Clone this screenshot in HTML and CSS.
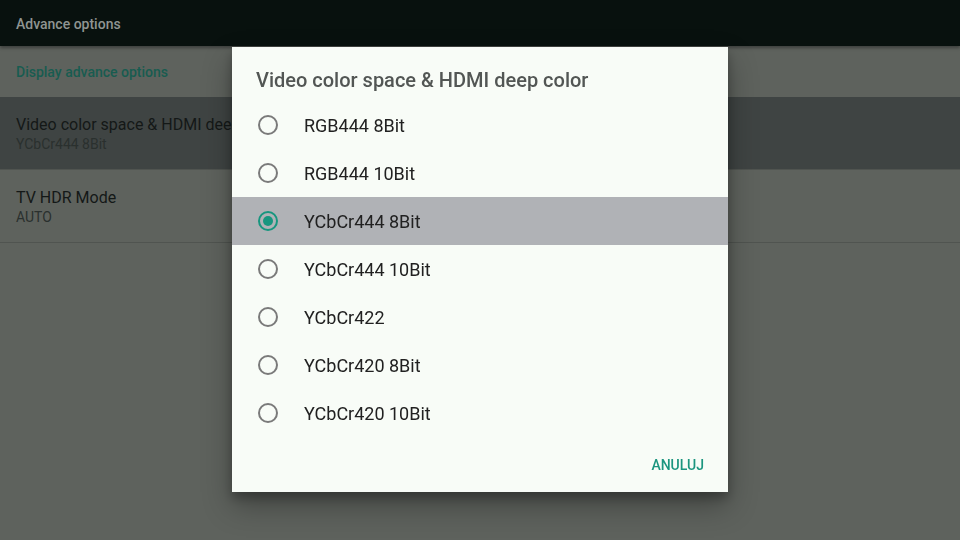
FILE: index.html
```html
<html>
  <head>
    <link rel="stylesheet" href="styles.css">
  </head>

  <body>
    <div class="screen">
      <div class="appbar">Advance options</div>
      <div class="settings">
        <div class="settings-header">Display advance options</div>
        <div class="settings-row selected">
          <div class="row-title">Video color space &amp; HDMI deep color</div>
          <div class="row-sub">YCbCr444 8Bit</div>
        </div>
        <div class="settings-row">
          <div class="row-title">TV HDR Mode</div>
          <div class="row-sub">AUTO</div>
        </div>
      </div>
    </div>

    <div class="scrim">
      <div class="dialog">
        <div class="dialog-title">Video color space &amp; HDMI deep color</div>
        <div class="choices">
          <div class="choice"><span class="radio"></span>RGB444 8Bit</div>
          <div class="choice"><span class="radio"></span>RGB444 10Bit</div>
          <div class="choice checked"><span class="radio"></span>YCbCr444 8Bit</div>
          <div class="choice"><span class="radio"></span>YCbCr444 10Bit</div>
          <div class="choice"><span class="radio"></span>YCbCr422</div>
          <div class="choice"><span class="radio"></span>YCbCr420 8Bit</div>
          <div class="choice"><span class="radio"></span>YCbCr420 10Bit</div>
        </div>
        <div class="dialog-actions">
          <div class="btn-text">ANULUJ</div>
        </div>
      </div>
    </div>
  </body>
</html>
```

FILE: styles.css
```css
body {
  margin: 0;
  width: 960px;
  height: 540px;
  overflow: hidden;
  font-family: Roboto, "Liberation Sans", sans-serif;
  background-color: rgb(94, 98, 93);
}
.screen {
  height: 540px;
  display: flex;
  flex-direction: column;
}
.appbar {
  height: 46px;
  flex: none;
  display: flex;
  align-items: center;
  padding-left: 16px;
  padding-top: 1px;
  box-sizing: border-box;
  font-size: 14px; font-weight: 500;
  color: rgb(143, 149, 146);
  background-color: rgb(8, 17, 14);
  box-shadow: 0 2px 3px rgba(0, 0, 0, 0.35);
}
.settings {
  display: flex;
  flex-direction: column;
}
.settings-header {
  height: 51px;
  display: flex;
  align-items: center;
  padding-left: 16px;
  font-size: 14px; font-weight: 500;
  color: rgb(24, 92, 80);
}
.settings-row {
  height: 72px;
  display: flex;
  flex-direction: column;
  justify-content: center;
  padding-left: 16px;
  border-bottom: 1px solid rgb(80, 84, 80);
}
.settings-row.selected {
  background-color: rgb(63, 68, 67);
}
.row-title {
  font-size: 16px;
  color: rgb(20, 24, 23);
  white-space: nowrap;
}
.row-sub {
  font-size: 14px;
  margin-top: 2px;
  color: rgb(42, 48, 46);
}
.scrim {
  position: fixed;
  top: 0; left: 0; right: 0; bottom: 0;
  display: flex;
  align-items: center;
  justify-content: center;
}
.dialog {
  width: 496px;
  margin-top: -1px;
  padding-bottom: 9px;
  background-color: rgb(248, 252, 247);
  box-shadow: 0 14px 28px rgba(0, 0, 0, 0.3), 0 6px 10px rgba(0, 0, 0, 0.25);
}
.dialog-title {
  padding: 21px 24px 9px 24px;
  line-height: 24px;
  font-size: 20px; font-weight: 500;
  color: rgb(82, 86, 84);
}
.choice {
  height: 48px;
  display: flex;
  align-items: center;
  gap: 24px;
  padding-left: 24px;
  font-size: 18px;
  color: rgb(33, 33, 33);
}
.choice.checked {
  background-color: rgb(176, 178, 182);
}
.radio {
  width: 20px; height: 20px;
  margin: 2px;
  box-sizing: border-box;
  border: 2px solid rgb(122, 122, 122);
  border-radius: 50%;
  position: relative;
}
.choice.checked .radio {
  border-color: rgb(23, 150, 127);
}
.choice.checked .radio::after {
  content: '';
  position: absolute;
  top: 3px; left: 3px;
  width: 10px; height: 10px;
  border-radius: 50%;
  background-color: rgb(23, 150, 127);
}
.dialog-actions {
  display: flex;
  justify-content: flex-end;
  padding: 10px 24px 0 0;
}
.btn-text {
  height: 36px;
  display: flex;
  align-items: center;
  font-size: 14px; font-weight: 500;
  color: rgb(27, 149, 127);
}
```
